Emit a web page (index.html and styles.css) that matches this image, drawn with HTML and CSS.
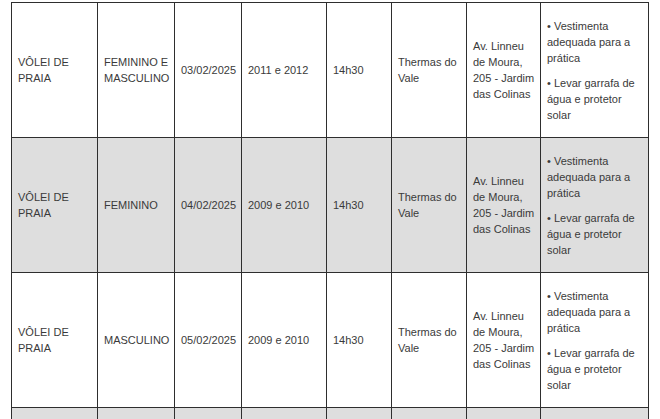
FILE: index.html
```html
<!DOCTYPE html>
<html lang="pt-BR">
<head>
<meta charset="utf-8">
<title>Tabela de modalidades</title>
<link rel="stylesheet" href="styles.css">
</head>
<body>
<table class="schedule">
  <colgroup>
    <col class="c1"><col class="c2"><col class="c3"><col class="c4"><col class="c5"><col class="c6"><col class="c7"><col class="c8">
  </colgroup>
  <tbody>
    <tr>
      <td>VÔLEI DE PRAIA</td>
      <td>FEMININO E MASCULINO</td>
      <td>03/02/2025</td>
      <td>2011 e 2012</td>
      <td>14h30</td>
      <td>Thermas do Vale</td>
      <td class="addr">Av. Linneu de Moura, 205 - Jardim das Colinas</td>
      <td class="notes"><p>• Vestimenta adequada para a prática</p><p>• Levar garrafa de água e protetor solar</p></td>
    </tr>
    <tr class="alt">
      <td>VÔLEI DE PRAIA</td>
      <td>FEMININO</td>
      <td>04/02/2025</td>
      <td>2009 e 2010</td>
      <td>14h30</td>
      <td>Thermas do Vale</td>
      <td class="addr">Av. Linneu de Moura, 205 - Jardim das Colinas</td>
      <td class="notes"><p>• Vestimenta adequada para a prática</p><p>• Levar garrafa de água e protetor solar</p></td>
    </tr>
    <tr>
      <td>VÔLEI DE PRAIA</td>
      <td>MASCULINO</td>
      <td>05/02/2025</td>
      <td>2009 e 2010</td>
      <td>14h30</td>
      <td>Thermas do Vale</td>
      <td class="addr">Av. Linneu de Moura, 205 - Jardim das Colinas</td>
      <td class="notes"><p>• Vestimenta adequada para a prática</p><p>• Levar garrafa de água e protetor solar</p></td>
    </tr>
    <tr class="alt">
      <td></td>
      <td></td>
      <td></td>
      <td></td>
      <td></td>
      <td></td>
      <td></td>
      <td></td>
    </tr>
  </tbody>
</table>
</body>
</html>
```

FILE: styles.css
```css
html, body {
  margin: 0;
  padding: 0;
  background: #ffffff;
}

body {
  font-family: "Liberation Sans", Arial, sans-serif;
  font-size: 11px;
  line-height: 16px;
  color: #3a3a3a;
}

.schedule {
  border-collapse: collapse;
  table-layout: fixed;
  width: 637px;
  margin: 2px 0 0 11px;
}

.c1 { width: 86px; }
.c2 { width: 77px; }
.c3 { width: 67px; }
.c4 { width: 85px; }
.c5 { width: 65px; }
.c6 { width: 75px; }
.c7 { width: 74px; }
.c8 { width: 108px; }

.schedule tr {
  height: 135px;
}

.schedule td {
  border: 1px solid #2e2e2e;
  padding: 0 4px 0 6px;
  vertical-align: middle;
  text-align: left;
}

.schedule tr.alt td {
  background: #dedede;
}

.notes p {
  margin: 0;
}

.notes p + p {
  margin-top: 9px;
}
```
